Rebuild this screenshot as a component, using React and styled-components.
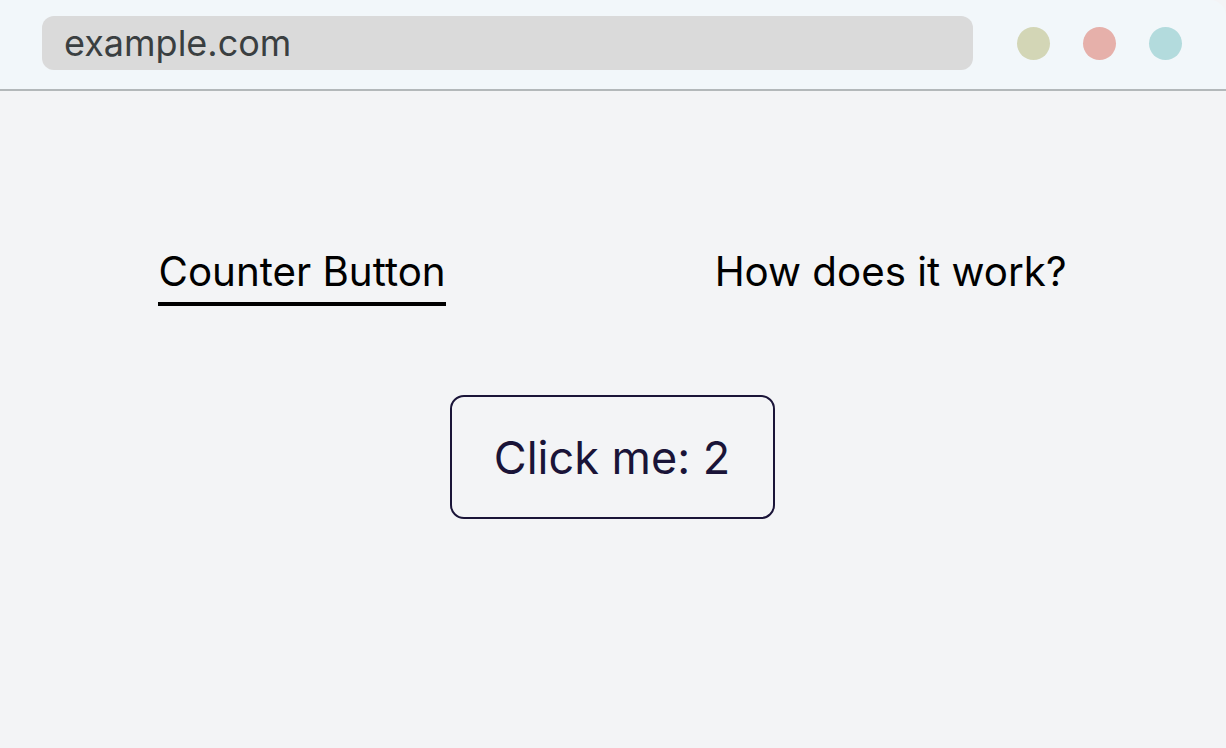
import React, { useState } from 'react';
import styled, { createGlobalStyle } from 'styled-components';

const GlobalStyle = createGlobalStyle`
  html, body {
    margin: 0;
    padding: 0;
    background: #f3f4f6;
  }
  body {
    font-family: Inter, 'Liberation Sans', sans-serif;
  }
`;

const Window = styled.div`
  width: 1226px;
  height: 748px;
  display: flex;
  flex-direction: column;
  background: #f3f4f6;
  overflow: hidden;
`;

const TopBar = styled.header`
  height: 91px;
  display: flex;
  align-items: flex-start;
  padding: 16px 44px 0 42px;
  gap: 44px;
  background: #f2f7fa;
  border-bottom: 2px solid #b3b8ba;
  border-top-right-radius: 16px;
  box-sizing: border-box;
`;

const AddressBar = styled.div`
  flex: 1;
  height: 54px;
  display: flex;
  align-items: center;
  padding-left: 22px;
  border-radius: 12px;
  background: #dadada;
  color: #3a3f41;
  font-size: 36px;
`;

const Dots = styled.div`
  display: flex;
  gap: 33px;
  padding-top: 11px;
`;

const Dot = styled.span`
  width: 33px;
  height: 33px;
  border-radius: 50%;
  background: ${(p) => p.color};
`;

const Main = styled.main`
  flex: 1;
  display: flex;
  flex-direction: column;
  align-items: center;
  padding: 156px 2px 0 0;
`;

const Tabs = styled.nav`
  width: 100%;
  display: flex;
  justify-content: space-around;
  padding: 0 23px 0 24px;
  box-sizing: border-box;
`;

const Tab = styled.button`
  border: none;
  background: none;
  padding: 0 0 6px;
  font-family: inherit;
  font-size: 40.3px;
  color: #000;
  cursor: pointer;
  border-bottom: 4px solid ${(p) => (p.active ? '#000' : 'transparent')};
`;

const CounterButton = styled.button`
  margin-top: 89px;
  width: 325px;
  height: 124px;
  border: 2px solid #1a1438;
  border-radius: 14px;
  background: transparent;
  color: #1a1438;
  font-family: inherit;
  font-size: 45px;
  cursor: pointer;
`;

export default function App() {
  const [count, setCount] = useState(2);
  const [tab, setTab] = useState('counter');
  return (
    <Window>
      <GlobalStyle />
      <TopBar>
        <AddressBar>example.com</AddressBar>
        <Dots>
          <Dot color="#d3d6b6" />
          <Dot color="#e6b0aa" />
          <Dot color="#b3dbdd" />
        </Dots>
      </TopBar>
      <Main>
        <Tabs>
          <Tab active={tab === 'counter'} onClick={() => setTab('counter')}>
            Counter Button
          </Tab>
          <Tab active={tab === 'how'} onClick={() => setTab('how')}>
            How does it work?
          </Tab>
        </Tabs>
        <CounterButton onClick={() => setCount(count + 1)}>Click me: {count}</CounterButton>
      </Main>
    </Window>
  );
}
